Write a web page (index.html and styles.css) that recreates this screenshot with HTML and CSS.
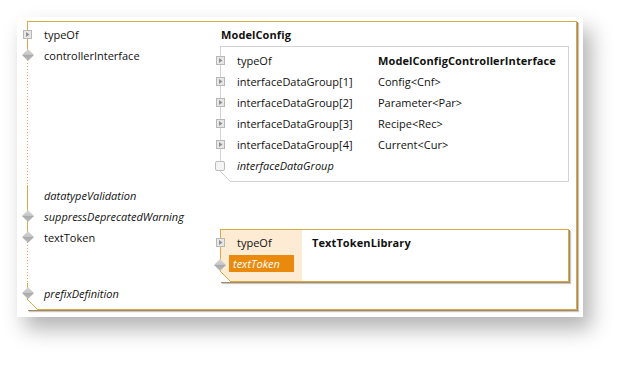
FILE: index.html
```html
<!DOCTYPE html>
<html lang="en">
<head>
  <meta charset="UTF-8" />
  <meta name="viewport" content="width=device-width, initial-scale=1.0" />
  <title>ModelConfig</title>
  <link rel="stylesheet" href="styles.css">
</head>
<body>
  <div class="card">
    <div class="node node-main">
      <div class="row">
        <div class="label">
          <svg class="ico expand" width="9" height="9" viewBox="0 0 9 9"><rect x="0.5" y="0.5" width="8" height="8" fill="#e7e7e7" stroke="#b7b7b7"/><polygon points="3,2 6.5,4.5 3,7" fill="#909090"/></svg>
          typeOf
        </div>
        <div class="value strong">ModelConfig</div>
      </div>

      <div class="row">
        <div class="label span">
          <svg class="ico diamond" width="12" height="12" viewBox="0 0 12 12"><defs><linearGradient id="dg" x1="0" y1="0" x2="0" y2="1"><stop offset="0" stop-color="#d9d9d9"/><stop offset="0.5" stop-color="#c4c4c4"/><stop offset="0.5" stop-color="#a9a9a9"/><stop offset="1" stop-color="#bdbdbd"/></linearGradient></defs><polygon points="6,0 12,6 6,12 0,6" fill="url(#dg)"/></svg>
          controllerInterface
        </div>
        <div class="value">
          <div class="node node-sub">
            <div class="row">
              <div class="label sub-label">
                <svg class="ico expand" width="9" height="9" viewBox="0 0 9 9"><rect x="0.5" y="0.5" width="8" height="8" fill="#e7e7e7" stroke="#b7b7b7"/><polygon points="3,2 6.5,4.5 3,7" fill="#909090"/></svg>
                typeOf
              </div>
              <div class="value strong">ModelConfigControllerInterface</div>
            </div>
            <div class="row">
              <div class="label sub-label">
                <svg class="ico expand" width="9" height="9" viewBox="0 0 9 9"><rect x="0.5" y="0.5" width="8" height="8" fill="#e7e7e7" stroke="#b7b7b7"/><polygon points="3,2 6.5,4.5 3,7" fill="#909090"/></svg>
                interfaceDataGroup[1]
              </div>
              <div class="value">Config&lt;Cnf&gt;</div>
            </div>
            <div class="row">
              <div class="label sub-label">
                <svg class="ico expand" width="9" height="9" viewBox="0 0 9 9"><rect x="0.5" y="0.5" width="8" height="8" fill="#e7e7e7" stroke="#b7b7b7"/><polygon points="3,2 6.5,4.5 3,7" fill="#909090"/></svg>
                interfaceDataGroup[2]
              </div>
              <div class="value">Parameter&lt;Par&gt;</div>
            </div>
            <div class="row">
              <div class="label sub-label">
                <svg class="ico expand" width="9" height="9" viewBox="0 0 9 9"><rect x="0.5" y="0.5" width="8" height="8" fill="#e7e7e7" stroke="#b7b7b7"/><polygon points="3,2 6.5,4.5 3,7" fill="#909090"/></svg>
                interfaceDataGroup[3]
              </div>
              <div class="value">Recipe&lt;Rec&gt;</div>
            </div>
            <div class="row">
              <div class="label sub-label">
                <svg class="ico expand" width="9" height="9" viewBox="0 0 9 9"><rect x="0.5" y="0.5" width="8" height="8" fill="#e7e7e7" stroke="#b7b7b7"/><polygon points="3,2 6.5,4.5 3,7" fill="#909090"/></svg>
                interfaceDataGroup[4]
              </div>
              <div class="value">Current&lt;Cur&gt;</div>
            </div>
            <div class="row">
              <div class="label sub-label optional">
                <svg class="ico empty" width="10" height="10" viewBox="0 0 10 10"><rect x="0.5" y="0.5" width="9" height="9" rx="1.5" fill="#f4f4f4" stroke="#bdbdbd"/></svg>
                interfaceDataGroup
              </div>
              <div class="value"></div>
            </div>
          </div>
        </div>
      </div>

      <div class="row">
        <div class="label optional">datatypeValidation</div>
        <div class="value"></div>
      </div>

      <div class="row">
        <div class="label optional">
          <svg class="ico diamond" width="12" height="12" viewBox="0 0 12 12"><polygon points="6,0 12,6 6,12 0,6" fill="url(#dg)"/></svg>
          suppressDeprecatedWarning
        </div>
        <div class="value"></div>
      </div>

      <div class="row">
        <div class="label span">
          <svg class="ico diamond" width="12" height="12" viewBox="0 0 12 12"><polygon points="6,0 12,6 6,12 0,6" fill="url(#dg)"/></svg>
          textToken
        </div>
        <div class="value">
          <div class="node node-lib">
            <div class="lib-labels">
              <div class="lib-row">
                <svg class="ico expand" width="9" height="9" viewBox="0 0 9 9"><rect x="0.5" y="0.5" width="8" height="8" fill="#e7e7e7" stroke="#b7b7b7"/><polygon points="3,2 6.5,4.5 3,7" fill="#909090"/></svg>
                typeOf
              </div>
              <div class="lib-row">
                <svg class="ico diamond" width="12" height="12" viewBox="0 0 12 12"><polygon points="6,0 12,6 6,12 0,6" fill="url(#dg)"/></svg>
                <span class="selected">textToken</span>
              </div>
            </div>
            <div class="lib-values">
              <div class="strong">TextTokenLibrary</div>
            </div>
          </div>
        </div>
      </div>

      <div class="row">
        <div class="label optional">
          <svg class="ico diamond" width="12" height="12" viewBox="0 0 12 12"><polygon points="6,0 12,6 6,12 0,6" fill="url(#dg)"/></svg>
          prefixDefinition
        </div>
        <div class="value"></div>
      </div>
    </div>
  </div>
</body>
</html>
```

FILE: styles.css
```css
body {
  margin: 0;
  padding-bottom: 60px;
  background: #fff;
  font-family: "Open Sans", sans-serif;
  font-size: 11px;
  color: #111;
}
.card {
  margin: 17px 0 0 17px;
  width: 566px;
  box-sizing: border-box;
  padding: 4px 6px 7px 10px;
  background: #fff;
  box-shadow: 8px 12px 20px rgba(0, 0, 0, 0.3);
}
.node {
  position: relative;
  box-sizing: border-box;
}
.node::after {
  content: "";
  position: absolute;
  left: -1px;
  bottom: -1px;
  width: 11px;
  height: 11px;
  background: linear-gradient(to top right, #fff 0 calc(50% - 0.7px), var(--line) calc(50% - 0.7px) calc(50% + 0.7px), transparent calc(50% + 0.7px));
}
.node-main {
  --line: #d9a847;
  border: 1px solid var(--line);
  padding: 2px 0 5px;
  box-shadow: 1px 1px 0 #a88a58, 2px 2px 1px rgba(0, 0, 0, 0.22);
}
.row {
  display: flex;
  margin-left: -1px;
}
.label {
  position: relative;
  flex: none;
  width: 193px;
  box-sizing: border-box;
  padding-left: 17px;
  line-height: 21px;
  white-space: nowrap;
}
.label.span {
  background:
    linear-gradient(#d9a847, #d9a847) 0 0 / 1px 5px no-repeat,
    repeating-linear-gradient(to bottom, #d9a847 0 1px, transparent 1px 3px) 0 0 / 1px 100% no-repeat,
    #fff;
}
.optional {
  font-style: italic;
}
.value {
  flex: 1;
  min-width: 0;
  line-height: 21px;
  padding-left: 1px;
}
.strong {
  font-weight: bold;
  letter-spacing: 0.1px;
}
.ico {
  position: absolute;
  display: block;
}
.label .expand {
  left: -4px;
  top: 6px;
}
.label .diamond {
  left: -5px;
  top: 4px;
}
.node-sub {
  --line: #cfcfcf;
  margin: 1px 7px 3px -1px;
  border: 1px solid #d3d3d3;
  padding: 3px 0 5px;
}
.node-sub .row {
  margin-left: -1px;
}
.sub-label {
  width: 158px;
}
.node-sub .value {
  padding-left: 0;
}
.label .empty {
  left: -5px;
  top: 6px;
}
.node-lib {
  --line: #d9a847;
  display: flex;
  margin: 2px 7px 1px -1px;
  border: 1px solid var(--line);
  box-shadow: 1px 1px 0 #a88a58, 2px 2px 1px rgba(0, 0, 0, 0.22);
}
.lib-labels {
  width: 81px;
  flex: none;
  background: #fdebd3;
  padding: 2px 0 5px;
}
.lib-row {
  position: relative;
  height: 21px;
  line-height: 21px;
  padding-left: 16px;
  white-space: nowrap;
}
.lib-row .expand {
  left: -5px;
  top: 6px;
}
.lib-row .diamond {
  left: -7px;
  top: 4px;
}
.selected {
  display: block;
  margin: 2px 8px 0 -8px;
  padding-left: 4px;
  line-height: 17px;
  background: #e98a0d;
  color: #fff;
  font-style: italic;
}
.lib-values {
  flex: 1;
  padding: 2px 0 0 10px;
  line-height: 21px;
}
```
